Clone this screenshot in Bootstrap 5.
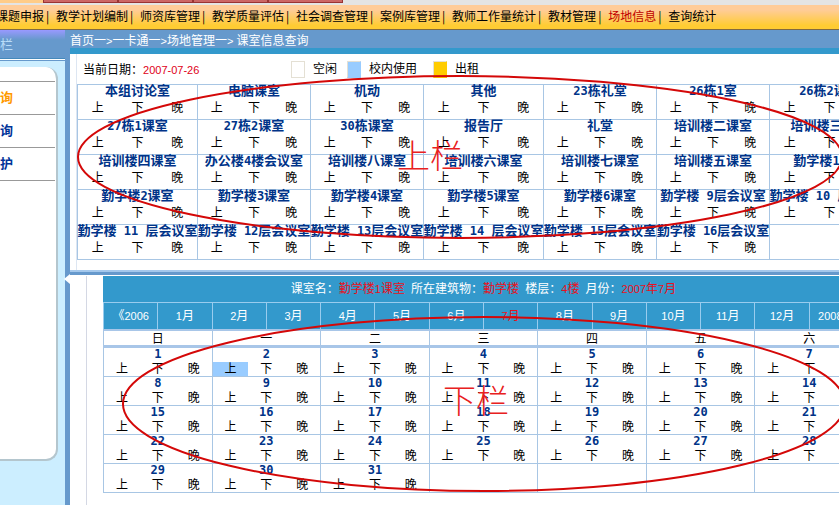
<!DOCTYPE html>
<html lang="zh-CN">
<head>
<meta charset="utf-8">
<meta name="viewport" content="width=device-width, initial-scale=1">
<title>课室信息查询</title>
<link href="https://cdn.jsdelivr.net/npm/bootstrap@5.3.0/dist/css/bootstrap.min.css" rel="stylesheet">
<style>
  body { font: 12px/16px "Noto Sans CJK SC", sans-serif; color: #000; background: #fff; }
  a { color: inherit; text-decoration: none; }
  .latin { font-family: "Liberation Sans", sans-serif; font-size: 11px; white-space: pre; }
  .colon { font-family: "Noto Sans CJK TC", sans-serif; }
  .top-tabs { height: 3px; background: #e4e4e4; }
  .top-tabs span { width: 75px; background: #cc6666; border: solid #993333; border-width: 0 1px 1px; }
  .top-tabs span:first-child { width: 43px; background: #ffcc88; border: 0; }
  .menu-bar { height: 27px; border-top: 2px solid #e4e4e4; border-bottom: 1px solid #806a40; background: linear-gradient(#ffcc99 20%, #ffcc33 85%); }
  .menu-bar ul { margin-left: -4px; height: 22px; }
  .menu-bar li:not(:last-child)::after { content: "|"; display: inline-block; width: 12px; padding-left: 2px; }
  .menu-bar .active { color: #c00000; }
  .side { width: 65px; background: #cceeff; }
  .side-head { height: 29px; color: #b8dcf8; font-size: 13px; background: linear-gradient(#9999ff, #6699cc 35%); border-bottom: 1px solid #4488bb; box-shadow: 0 1px #fff, 0 2px #6699cc; }
  .side-card { margin: 8px 7px 0 0; height: 394px; padding-top: 14px; background: #fff; border: solid #b4c6ce; border-width: 0 2px 2px 0; border-radius: 0 12px 12px 0; }
  .side-card a { display: block; width: 55px; height: 33px; line-height: 30px; font-size: 13px; font-weight: 700; color: #003399; border-top: 1px solid #999; }
  .side-card a:first-child { color: #ff9900; }
  .side-card a:last-child { height: 34px; border-bottom: 1px solid #999; }
  .split-v { width: 5px; background: #6699cc; }
  .split-v button { top: 244px; left: -1px; width: 6px; height: 10px; background: #fff; clip-path: polygon(100% 0, 100% 100%, 0 50%); }
  .crumbs { height: 24px; line-height: 20px; color: #fff; background: #6699cc; border-bottom: 6px solid #3399cc; }
  .crumbs ol { height: 18px; }
  .rooms-pane { height: 216px; padding-left: 6px; }
  .rooms-pane > div { border-left: 1px solid #dde6f2; }
  .legend-row { height: 30px; line-height: 14px; padding-left: 6px; }
  .legend-row span { flex-shrink: 0; }
  .legend-row .today { width: 208px; }
  .legend-row .key { display: flex; gap: 8px; margin-right: 10px; }
  .legend-row .key-wide { margin-right: 16px; }
  .red-text { color: #e00018; }
  .swatch { width: 14px; height: 17px; border: 1px solid #e4e0d4; }
  .swatch-in { background: #99ccff; border-right-color: #99ccff; border-bottom-color: #99ccff; }
  .swatch-out { background: #ffcc00; border-right-color: #ffcc00; border-bottom-color: #ffcc00; }
  .rooms-table, .cal-table { table-layout: fixed; border-collapse: collapse; }
  .rooms-table { width: 813px; }
  .rooms-table .wide { width: 120px; }
  .rooms-table .slim { width: 113px; }
  .rooms-table td, .cal-table td, .cal-table th { padding: 0; border: 1px solid #a8c6e4; text-align: center; white-space: nowrap; }
  .rooms-table td { height: 35px; }
  .cell-title { display: flex; justify-content: center; align-items: baseline; height: 14px; line-height: 10px; font-size: 13px; font-weight: 700; color: #003388; }
  .cell-title .latin { font-family: "DejaVu Sans Mono", monospace; font-size: 12px; }
  .cal-table .cell-title { line-height: 12px; }
  .slots { height: 14px; line-height: 12px; }
  .slots span { flex: 1 1 0; }
  .slots .used { background: #99ccff; }
  .rooms-table .slots { height: 20px; line-height: 16px; }
  .split-h { height: 6px; background: #6699cc; border-top: 2px solid #a4c8ec; border-bottom: 1px solid #fff; }
  .cal-pane { padding-left: 16px; }
  .cal-pane > div { border-left: 1px solid #d4d8e4; padding-left: 16px; }
  .cal-wrap { width: 761px; }
  .cal-title { height: 26px; padding-bottom: 2px; color: #fff; background: #3399cc; }
  .cal-title .red-text, .months .active { color: #e81020; }
  .months { height: 27px; color: #fff; background: #3399cc; border: solid #99ccee; border-width: 1px 1px 0 0; }
  .months a { flex: 1 1 0; line-height: 23px; text-align: center; border-left: 1px solid #99ccee; }
  .cal-table { width: 100%; }
  .cal-table th { height: 16px; line-height: 12px; font-weight: 400; border-top: 2px solid #a8c6e8; border-bottom: 3px solid #a8c6e8; }
  .cal-table td { height: 29px; }
  .marks { inset: 0; pointer-events: none; }
  .marks ellipse { fill: none; stroke: #d40808; stroke-width: 2; }
  .marks text { font: 300 33px "Noto Sans CJK SC", sans-serif; fill: #e82020; }
</style>
<script src="https://cdn.jsdelivr.net/npm/bootstrap@5.3.0/dist/js/bootstrap.bundle.min.js"></script>
</head>
<body class="vh-100 overflow-hidden d-flex flex-column position-relative">
<header class="flex-shrink-0">
  <div class="top-tabs d-flex"><span></span><span></span><span></span><span></span><span></span></div>
  <nav class="menu-bar overflow-hidden">
    <ul class="list-unstyled d-flex align-items-center text-nowrap mb-0">
      <li><a href="#">课题申报</a></li><li><a href="#">教学计划编制</a></li><li><a href="#">师资库管理</a></li><li><a href="#">教学质量评估</a></li><li><a href="#">社会调查管理</a></li><li><a href="#">案例库管理</a></li><li><a href="#">教师工作量统计</a></li><li><a href="#">教材管理</a></li><li><a href="#" class="active">场地信息</a></li><li><a href="#">查询统计</a></li>
    </ul>
  </nav>
</header>
<div class="d-flex flex-grow-1 overflow-hidden">
  <aside class="side flex-shrink-0">
    <div class="side-head d-flex align-items-center">栏</div>
    <nav class="side-card"><a href="#">询</a><a href="#">询</a><a href="#">护</a></nav>
  </aside>
  <div class="split-v flex-shrink-0 position-relative"><button type="button" class="position-absolute border-0 p-0" aria-label="收起"></button></div>
  <main class="flex-grow-1 overflow-hidden">
    <nav class="crumbs">
      <ol class="list-unstyled d-flex mb-0">
        <li><a href="#">首页</a>一<span class="latin">&gt;</span></li><li><a href="#">一卡通</a>一<span class="latin">&gt;</span></li><li><a href="#">场地管理</a>一<span class="latin">&gt; </span></li><li>课室信息查询</li>
      </ol>
    </nav>
    <section class="rooms-pane">
      <div class="h-100">
        <div class="legend-row d-flex align-items-center">
          <span class="today">当前日期<span class="colon">：</span><span class="latin red-text">2007-07-26</span></span>
          <span class="key"><span class="swatch"></span>空闲</span>
          <span class="key key-wide"><span class="swatch swatch-in"></span>校内使用</span>
          <span class="key"><span class="swatch swatch-out"></span>出租</span>
        </div>
        <table class="rooms-table">
          <colgroup><col class="wide"><col class="slim"><col class="slim"><col class="wide"><col class="slim"><col class="slim"><col class="wide"></colgroup>
          <tbody id="rooms"></tbody>
        </table>
      </div>
    </section>
    <div class="split-h"></div>
    <section class="cal-pane">
      <div class="vh-100">
        <div class="cal-wrap">
          <div class="cal-title d-flex justify-content-center align-items-center">
            <div>课室名<span class="colon">：</span><span class="red-text">勤学楼<span class="latin">1</span>课室</span><span class="latin">  </span>所在建筑物<span class="colon">：</span><span class="red-text">勤学楼</span><span class="latin">  </span>楼层<span class="colon">：</span><span class="red-text"><span class="latin">4</span>楼</span><span class="latin">  </span>月份<span class="colon">：</span><span class="red-text"><span class="latin">2007</span>年<span class="latin">7</span>月</span></div>
          </div>
          <nav class="months d-flex" id="months"></nav>
          <table class="cal-table">
            <thead><tr><th>日</th><th>一</th><th>二</th><th>三</th><th>四</th><th>五</th><th>六</th></tr></thead>
            <tbody id="days"></tbody>
          </table>
        </div>
      </div>
    </section>
  </main>
</div>
<svg class="marks position-absolute w-100 h-100" aria-hidden="true">
  <ellipse cx="460" cy="157" rx="382" ry="81"/>
  <ellipse cx="484" cy="404" rx="361" ry="87"/>
  <text x="397" y="168">上栏</text>
  <text x="443" y="413">下栏</text>
</svg>
<script>
  const latin = s => s.replace(/[\d ]+/g, m => `<span class="latin">${m}</span>`);
  const slots = used => '<div class="slots d-flex">' + ['上', '下', '晚'].map(s => `<span${s === used ? ' class="used"' : ''}>${s}</span>`).join('') + '</div>';
  const rooms = [
    ['本组讨论室', '电脑课室', '机动', '其他', '23栋礼堂', '26栋1室', '26栋2课室'],
    ['27栋1课室', '27栋2课室', '30栋课室', '报告厅', '礼堂', '培训楼二课室', '培训楼三课室'],
    ['培训楼四课室', '办公楼4楼会议室', '培训楼八课室', '培训楼六课室', '培训楼七课室', '培训楼五课室', '勤学楼1课室'],
    ['勤学楼2课室', '勤学楼3课室', '勤学楼4课室', '勤学楼5课室', '勤学楼6课室', '勤学楼 9层会议室', '勤学楼 10 层会议室'],
    ['勤学楼 11 层会议室', '勤学楼 12层会议室', '勤学楼 13层会议室', '勤学楼 14 层会议室', '勤学楼 15层会议室', '勤学楼 16层会议室', '']
  ];
  document.getElementById('rooms').innerHTML = rooms.map(r => '<tr>' + r.map(n =>
    n ? `<td><a href="#" class="cell-title">${latin(n)}</a>${slots()}</td>` : '<td></td>').join('') + '</tr>').join('');
  const months = ['《2006', ...Array.from({ length: 12 }, (_, i) => `${i + 1}月`), '2008》'];
  document.getElementById('months').innerHTML = months.map(m =>
    `<a href="#"${m === '7月' ? ' class="active"' : ''}>${latin(m)}</a>`).join('');
  let html = '';
  for (let w = 0; w < 5; w++) {
    html += '<tr>';
    for (let d = 1; d <= 7; d++) {
      const n = w * 7 + d;
      html += n <= 31 ? `<td><div class="cell-title">${latin(String(n))}</div>${slots(n === 2 ? '上' : '')}</td>` : '<td></td>';
    }
    html += '</tr>';
  }
  document.getElementById('days').innerHTML = html;
</script>
</body>
</html>
